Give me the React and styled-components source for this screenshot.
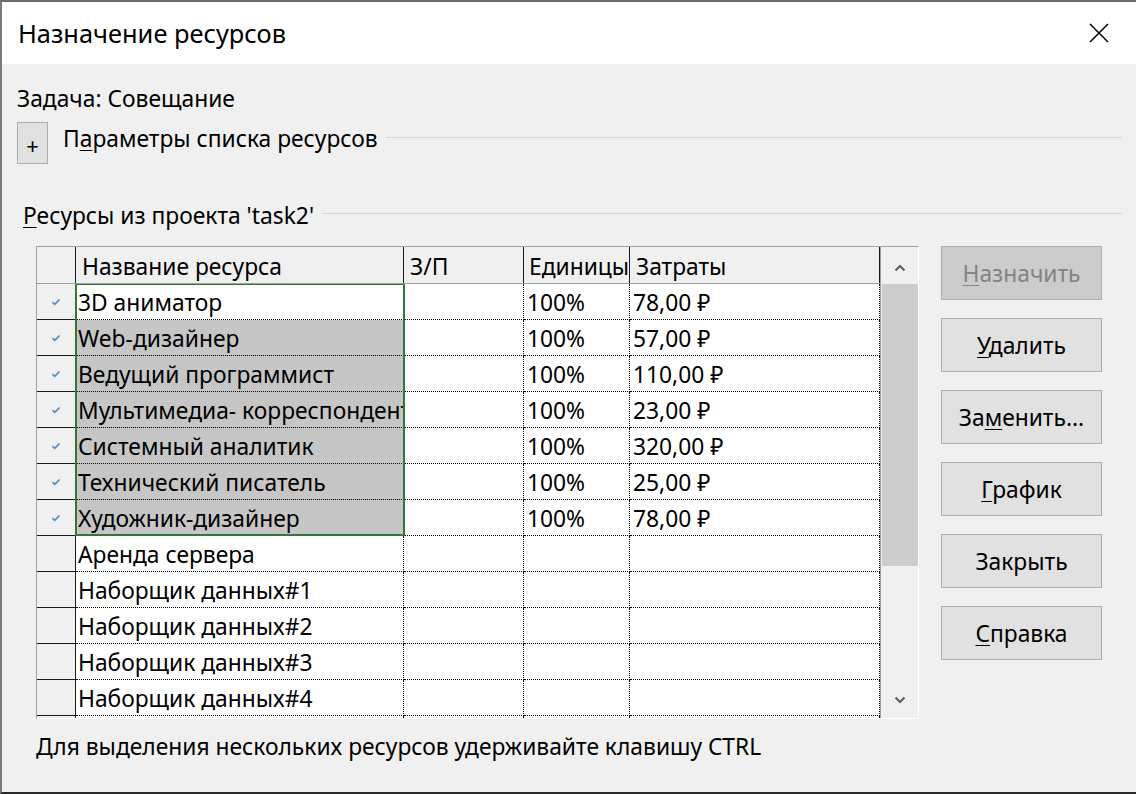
import React from "react";
import styled, { createGlobalStyle } from "styled-components";

const Global = createGlobalStyle`
  html, body { margin: 0; padding: 0; background: #ffffff; }
  body { font-family: "Noto Sans", "Open Sans", Arial, sans-serif; color: #000; }
  * { box-sizing: border-box; }
`;

const Window = styled.div`
  width: 1136px;
  height: 794px;
  border-left: 2px solid #7a7a7a;
  border-top: 2px solid #6e6e6e;
  border-bottom: 2px solid #2a2a2a;
  display: flex;
  flex-direction: column;
  overflow: hidden;
`;

const TitleBar = styled.div`
  height: 62px;
  flex: none;
  background: #ffffff;
  display: flex;
  align-items: center;
  justify-content: space-between;
  padding: 0 26px 0 16px;
`;

const Title = styled.div`
  font-size: 25.4px;
  margin-top: 0px;
`;

const CloseBtn = styled.div`
  width: 22px;
  height: 22px;
  display: flex;
  align-items: center;
  justify-content: center;
`;

const Body = styled.div`
  flex: 1;
  background: #f0f0f0;
  padding: 23px 14px 0 15px;
  display: flex;
  flex-direction: column;
  font-size: 22.8px;
`;

const TaskLabel = styled.div`
  line-height: 24px;
`;

const GroupRow = styled.div`
  display: flex;
  align-items: flex-start;
  margin-top: ${(p) => p.$mt}px;
  padding-left: ${(p) => p.$pl || 0}px;
`;

const PlusButton = styled.div`
  width: 31px;
  height: 42px;
  background: #e1e1e1;
  border: 1px solid #adadad;
  display: flex;
  align-items: center;
  justify-content: center;
  font-size: 22px;
  padding-top: 4px;
  flex: none;
`;

const GroupLabel = styled.div`
  line-height: 24px;
  margin-top: ${(p) => p.$mt || 0}px;
  margin-left: ${(p) => p.$ml || 0}px;
  white-space: nowrap;
`;

const GroupLine = styled.div`
  flex: 1;
  margin-left: 8px;
  margin-top: ${(p) => p.$mt}px;
  border-top: 1px solid #d8d8d8;
`;

const Mn = styled.span`
  text-decoration: underline;
  text-underline-offset: 3px;
  text-decoration-thickness: 1px;
`;

const MainArea = styled.div`
  display: flex;
  align-items: flex-start;
  margin-top: 18px;
  margin-left: 19px;
  gap: 22px;
`;

const Table = styled.div`
  width: 883px;
  height: 473px;
  border-left: 1px solid #a0a0a0;
  border-top: 1px solid #a0a0a0;
  border-right: 1px solid #ffffff;
  border-bottom: 1px solid #ffffff;
  display: flex;
  overflow: hidden;
`;

const Grid = styled.div`
  width: 843px;
  display: flex;
  flex-direction: column;
  background: #ffffff;
`;

const cols = "39px 328px 120px 106px 250px";

const HeaderRow = styled.div`
  display: grid;
  grid-template-columns: ${cols};
  height: 37px;
  flex: none;
  background: #f0f0f0;
  border-bottom: 1px solid #a0a0a0;
`;

const HeadCell = styled.div`
  border-right: 1px solid #1a1a1a;
  display: flex;
  align-items: center;
  padding: 3px 0 0 ${(p) => p.$pl || 6}px;
  white-space: nowrap;
  overflow: hidden;
`;

const RowsArea = styled.div`
  position: relative;
  flex: 1;
  overflow: hidden;
`;

const Row = styled.div`
  display: grid;
  grid-template-columns: ${cols};
  height: 36px;
`;

const RowHead = styled.div`
  background: #f0f0f0;
  border-right: 1px solid #1a1a1a;
  border-bottom: 1px solid #1a1a1a;
  display: flex;
  align-items: center;
  justify-content: center;
`;

const Cell = styled.div`
  background: ${(p) => (p.$sel ? "#c6c6c6" : "#ffffff")};
  border-right: 1px dotted #000;
  border-bottom: 1px dotted #000;
  display: flex;
  align-items: center;
  padding: 1px 0 0 ${(p) => p.$pl || 3}px;
  white-space: nowrap;
  overflow: hidden;
`;

const Selection = styled.div`
  position: absolute;
  left: 38px;
  top: -1px;
  width: 330px;
  height: 253px;
  border: 2px solid #337733;
  pointer-events: none;
`;

const ScrollBar = styled.div`
  width: 39px;
  display: flex;
  flex-direction: column;
  background: #f0f0f0;
  border-left: 1px solid #a0a0a0;
`;

const ArrowBox = styled.div`
  height: ${(p) => p.$h}px;
  flex: none;
  display: flex;
  align-items: center;
  justify-content: center;
  padding-top: ${(p) => p.$pt || 0}px;
`;

const Track = styled.div`
  flex: 1;
  display: flex;
  flex-direction: column;
  padding-left: 1px;
`;

const Thumb = styled.div`
  height: 282px;
  background: #cdcdcd;
`;

const Buttons = styled.div`
  display: flex;
  flex-direction: column;
  gap: 18px;
`;

const Button = styled.div`
  width: 161px;
  height: 54px;
  background: ${(p) => (p.$disabled ? "#cccccc" : "#e1e1e1")};
  color: ${(p) => (p.$disabled ? "#838383" : "#000")};
  border: 1px solid #adadad;
  display: flex;
  align-items: center;
  justify-content: center;
  padding-top: 1px;
  white-space: nowrap;
`;

const Footer = styled.div`
  margin-top: 16px;
  margin-left: 19px;
  line-height: 24px;
`;

const Check = () => (
  <svg width="10" height="8" viewBox="0 0 10 8">
    <path d="M1.5 4.2 L3.8 6.3 L8.5 1.5" fill="none" stroke="#5b84b8" strokeWidth="1.7" />
  </svg>
);

const Chevron = ({ down }) => (
  <svg width="12" height="8" viewBox="0 0 12 8">
    <path
      d={down ? "M1.5 1.5 L6 6 L10.5 1.5" : "M1.5 6.5 L6 2 L10.5 6.5"}
      fill="none"
      stroke="#606060"
      strokeWidth="2.2"
    />
  </svg>
);

const rows = [
  { name: "3D аниматор", units: "100%", cost: "78,00 ₽", c: true, s: false },
  { name: "Web-дизайнер", units: "100%", cost: "57,00 ₽", c: true, s: true },
  { name: "Ведущий программист", units: "100%", cost: "110,00 ₽", c: true, s: true },
  { name: "Мультимедиа- корреспондент", units: "100%", cost: "23,00 ₽", c: true, s: true },
  { name: "Системный аналитик", units: "100%", cost: "320,00 ₽", c: true, s: true },
  { name: "Технический писатель", units: "100%", cost: "25,00 ₽", c: true, s: true },
  { name: "Художник-дизайнер", units: "100%", cost: "78,00 ₽", c: true, s: true },
  { name: "Аренда сервера" },
  { name: "Наборщик данных#1" },
  { name: "Наборщик данных#2" },
  { name: "Наборщик данных#3" },
  { name: "Наборщик данных#4" },
  { name: "" },
];

export default function App() {
  return (
    <>
      <Global />
      <Window>
        <TitleBar>
          <Title>Назначение ресурсов</Title>
          <CloseBtn>
            <svg width="20" height="20" viewBox="0 0 20 20">
              <path d="M1 1 L19 19 M19 1 L1 19" stroke="#000" strokeWidth="1.5" />
            </svg>
          </CloseBtn>
        </TitleBar>
        <Body>
          <TaskLabel>Задача: Совещание</TaskLabel>
          <GroupRow $mt={11}>
            <PlusButton>+</PlusButton>
            <GroupLabel $mt={5} $ml={15}>
              П<Mn>а</Mn>раметры списка ресурсов
            </GroupLabel>
            <GroupLine $mt={15} />
          </GroupRow>
          <GroupRow $mt={40} $pl={6}>
            <GroupLabel>
              <Mn>Р</Mn>есурсы из проекта 'task2'
            </GroupLabel>
            <GroupLine $mt={9} />
          </GroupRow>
          <MainArea>
            <Table>
              <Grid>
                <HeaderRow>
                  <HeadCell />
                  <HeadCell $pl={6}>Название ресурса</HeadCell>
                  <HeadCell $pl={6}>З/П</HeadCell>
                  <HeadCell $pl={5}>Единицы</HeadCell>
                  <HeadCell $pl={6}>Затраты</HeadCell>
                </HeaderRow>
                <RowsArea>
                  {rows.map((r, i) => (
                    <Row key={i}>
                      <RowHead>{r.c ? <Check /> : null}</RowHead>
                      <Cell $sel={r.s} $pl={2}>{r.name}</Cell>
                      <Cell />
                      <Cell>{r.units || ""}</Cell>
                      <Cell>{r.cost || ""}</Cell>
                    </Row>
                  ))}
                  <Selection />
                </RowsArea>
              </Grid>
              <ScrollBar>
                <ArrowBox $h={37} $pt={4}>
                  <Chevron />
                </ArrowBox>
                <Track>
                  <Thumb />
                </Track>
                <ArrowBox $h={36}>
                  <Chevron down />
                </ArrowBox>
              </ScrollBar>
            </Table>
            <Buttons>
              <Button $disabled>
                <span>
                  <Mn>Н</Mn>азначить
                </span>
              </Button>
              <Button>
                <span>
                  <Mn>У</Mn>далить
                </span>
              </Button>
              <Button>
                <span>
                  За<Mn>м</Mn>енить...
                </span>
              </Button>
              <Button>
                <span>
                  <Mn>Г</Mn>рафик
                </span>
              </Button>
              <Button>Закрыть</Button>
              <Button>
                <span>
                  <Mn>С</Mn>правка
                </span>
              </Button>
            </Buttons>
          </MainArea>
          <Footer>Для выделения нескольких ресурсов удерживайте клавишу CTRL</Footer>
        </Body>
      </Window>
    </>
  );
}
